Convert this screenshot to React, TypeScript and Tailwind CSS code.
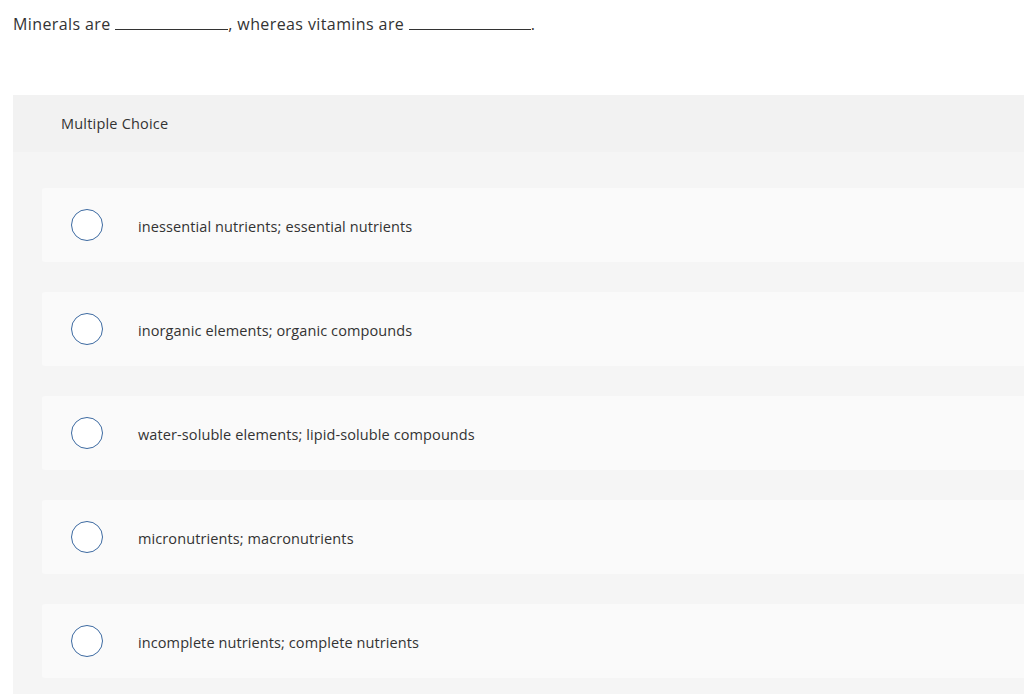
const options = [
  'inessential nutrients; essential nutrients',
  'inorganic elements; organic compounds',
  'water-soluble elements; lipid-soluble compounds',
  'micronutrients; macronutrients',
  'incomplete nutrients; complete nutrients',
];

function Blank({ width }: { width: string }) {
  return <span className={`inline-block border-b border-[#333] align-baseline ${width} h-[1px]`} />;
}

export default function App() {
  return (
    <div className="w-[1024px] h-[694px] overflow-hidden bg-white font-['Open_Sans','Liberation_Sans',sans-serif] text-[#333]">
      <p className="pl-[13px] pt-[13px] text-[16px] leading-[22px] tracking-[0.4px]">
        Minerals are <Blank width="w-[113px]" />, whereas vitamins are <Blank width="w-[122px]" />.
      </p>

      <div className="ml-[13px] mt-[60px] w-[1100px] bg-[#f5f5f5]">
        <div className="h-[57px] bg-[#f2f2f2] pl-[48px] flex items-center text-[14.5px] tracking-[0.2px]">
          Multiple Choice
        </div>
        <div className="pl-[29px] pt-[36px] pb-[16px] flex flex-col gap-[30px]">
          {options.map(option => (
            <div key={option} className="h-[74px] bg-[#fafafa] rounded-[3px] flex items-center pl-[29px]">
              <span className="w-[32px] h-[32px] rounded-full border-[1.5px] border-[#3d6aa1] bg-white shrink-0" />
              <span className="ml-[35px] pt-[3px] text-[14.5px] tracking-[0.1px]">{option}</span>
            </div>
          ))}
        </div>
      </div>
    </div>
  );
}
